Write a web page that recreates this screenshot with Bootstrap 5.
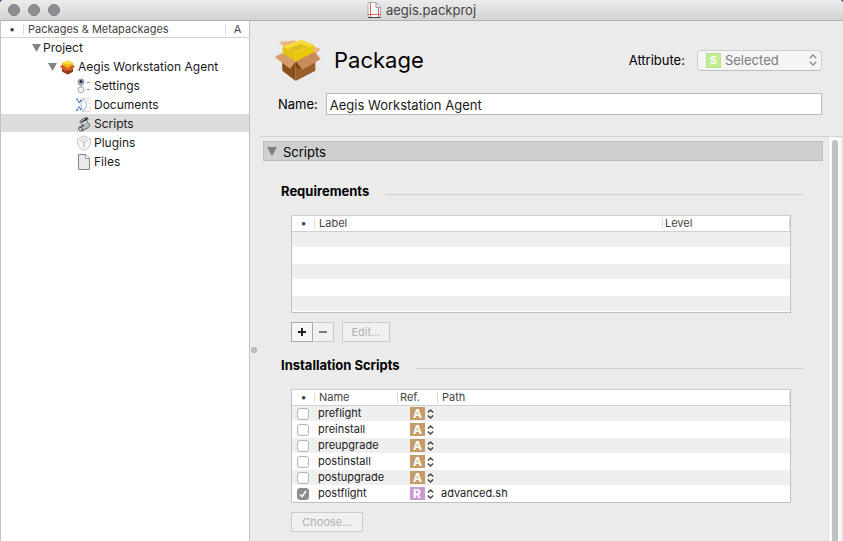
<!DOCTYPE html>
<html lang="en">
<head>
<meta charset="utf-8">
<meta name="viewport" content="width=device-width, initial-scale=1">
<title>aegis.packproj</title>
<link href="https://cdn.jsdelivr.net/npm/bootstrap@5.3.0/dist/css/bootstrap.min.css" rel="stylesheet">
<style>
  body { font-family: Inter, "Liberation Sans", sans-serif; font-size: 13px; line-height: 16px; color: #000; background: #27468c; }
  svg { display: block; flex: none; }
  .app-window { background: #ebebeb; border-radius: 4px 4px 0 0; overflow: hidden; }
  .title-bar { height: 21px; background: linear-gradient(#ececec, #d3d3d3); border-bottom: 1px solid #b1b1b1; color: #444; }
  .lights { width: 0; padding-left: 8px; gap: 8px; }
  .light { width: 12px; height: 12px; border-radius: 50%; background: #8f8e93; border: 1px solid #7e7d82; flex: none; padding: 0; }

  .source-list { width: 250px; background: #fff; border: solid #c2c2c2; border-width: 0 1px; font-size: 12px; }
  .source-head { height: 17px; border-bottom: 1px solid #d2d2d2; font-size: 11px; color: #444; }
  .source-head > * + * { border-left: 1px solid #dcdcdc; line-height: 11px; }
  .dot-col { width: 22px; }
  .attr-col { width: 24px; }
  .tree-row { height: 19px; padding-top: 2px; border-bottom: 1px solid transparent; background-clip: padding-box; color: #1a1a1a; text-decoration: none; }
  .tree-row.active { background-color: #dcdcdc; }
  .lvl-1 { padding-left: 31px; gap: 2px; }
  .lvl-2 { padding-left: 47px; gap: 3px; }
  .lvl-3 { padding-left: 75px; gap: 2px; }

  .splitter { width: 10px; padding-top: 326px; }
  .grip { width: 6px; height: 6px; border-radius: 50%; background: #c0c0c0; border: 1px solid #acacac; margin-left: 1px; }
  .pkg-head { height: 116px; padding: 17px 20px 21px 14px; border-bottom: 1px solid #d2d2d2; margin-right: 1px; }
  .pkg-title { font-size: 22px; line-height: 28px; font-weight: 400; }
  .popup { width: 125px; height: 21px; border: 1px solid #cfcfcf; border-bottom-color: #bdbdbd; border-radius: 4px; background: #f5f5f5; padding: 0 4px 0 8px; gap: 4px; }
  .popup select { appearance: none; border: 0; background: none; color: #7b7b7b; opacity: 1; padding: 0; min-width: 0; }
  .tag-s { width: 15px; height: 15px; background: #c1ed95; border: 1px solid #b6e58a; color: #fff; font-weight: 700; font-size: 11px; line-height: 13px; }
  .name-input { height: 22px; border: 1px solid #b9b9b9; background: #fff; padding: 2px 3px 0; min-width: 0; color: #1a1a1a; outline: 0; }

  .pane { padding: 4px 5px 9px 3px; min-width: 0; }
  .section-bar { height: 20px; border: 1px solid #bdbdbd; background: #cfcfcf; padding: 1px 3px 0; gap: 6px; }
  .group { padding: 15px 20px 0 18px; }
  .section-bar + .group { padding-top: 22px; }
  .group h2 { font-size: 13px; line-height: 16px; font-weight: 700; }
  .rule { height: 1px; background: #d0d0d0; margin-top: 7px; }
  .group-body { padding: 0 12px 0 10px; }

  .data-table { width: 100%; margin-bottom: 9px; table-layout: fixed; border-collapse: separate; border-spacing: 0; border: 1px solid #c0c0c0; border-top-color: #d0d0d0; background: #fff; font-size: 11px; line-height: 15px; color: #1a1a1a; }
  .data-table th { height: 16px; padding: 0 4px; font-weight: 400; color: #444; border-bottom: 1px solid #d0d0d0; background: linear-gradient(#dcdcdc, #dcdcdc) right 2px / 1px 11px no-repeat; }
  .data-table td { height: 16px; padding: 0 3px; border-bottom: 1px solid #fff; background-clip: padding-box; }
  .data-table tbody tr:nth-child(odd) td { background-color: #efefef; }
  .data-table .c-dot { width: 23px; padding: 0; text-align: center; }
  .c-name { width: 83px; }
  .c-ref { width: 40px; }
  .c-level { width: 127px; }
  .data-table th.tight { padding-left: 2px; }
  .data-table td.ref-cell { padding: 0 0 0 12px; }
  .data-table input { appearance: none; display: block; width: 12px; height: 12px; margin: 1px 0 0 5px; border: 1px solid #b4b4b4; border-radius: 3px; background: #fff; }
  .data-table input:checked { border-color: #8a898e; background: #8e8d92 url("data:image/svg+xml,%3Csvg xmlns='http://www.w3.org/2000/svg' viewBox='0 0 10 10'%3E%3Cpath d='M2 5.4l2 2.2L8 2' fill='none' stroke='white' stroke-width='1.5'/%3E%3C/svg%3E") center / 10px 10px; }
  .ref-pick { --tag: #c69c6d; appearance: none; display: block; width: 25px; height: 13px; border: 0; padding: 0 0 0 3px; color: #fff; font-size: 12px; line-height: 13px; font-weight: 700;
    background: url("data:image/svg+xml,%3Csvg xmlns='http://www.w3.org/2000/svg' viewBox='0 0 7 10'%3E%3Cpath d='M.8 3.6L3.5 1l2.7 2.6M.8 6.4L3.500 9l2.7-2.6' fill='none' stroke='%23444' stroke-width='1.4'/%3E%3C/svg%3E") right 1px top 2px / 7px 10px no-repeat, linear-gradient(var(--tag), var(--tag)) left / 15px 13px no-repeat; }
  .ref-pick.rel { --tag: #cc99d2; }
  .ref-pick option { color: #000; }

  .tool-btn { height: 20px; border: 1px solid #a9a9a9; background: #f6f6f6; color: #222; padding: 0; font-size: 11px; line-height: 16px; }
  .tool-btn:disabled { border-color: #cbcbcb; background: #f0f0f0; color: #b2b2b2; }
  .tool-btn.sq { width: 22px; }
  .tool-btn.sq + .sq { width: 21px; border-left: 0; }
  .w-edit { width: 48px; }
  .w-choose { width: 72px; }

  .track { width: 15px; padding: 3px 3px 0; background: #fafafa; border-left: 1px solid #e3e3e3; border-right: 2px solid #ebebeb; }
  .thumb { width: 8px; border-radius: 4px 4px 0 0; background: #c1c1c1; }
</style>
<script src="https://cdn.jsdelivr.net/npm/bootstrap@5.3.0/dist/js/bootstrap.bundle.min.js"></script>
</head>
<body>
<div class="app-window d-flex flex-column min-vh-100">
  <header class="title-bar d-flex align-items-center">
    <div class="lights d-flex">
      <button class="light" aria-label="Close"></button>
      <button class="light" aria-label="Minimise"></button>
      <button class="light" aria-label="Zoom"></button>
    </div>
    <div class="flex-fill d-flex justify-content-center align-items-center gap-1 pe-2">
      <svg width="15" height="16" viewBox="0 0 15 16"><path d="M1 .5h8.500l4 4V15.500H1z" fill="#fafafa" stroke="#aaa"/><path d="M1 15.500h12.500" stroke="#444"/><path d="M9 1v4.500h4.500" fill="#e4e4e4" stroke="#999"/><path d="M3.500 1v14M11.500 6v9M1 12.500h12.500" stroke="#e86060"/></svg>
      <span>aegis.packproj</span>
    </div>
  </header>

  <div class="d-flex flex-fill">
    <nav class="source-list flex-shrink-0" aria-label="Project">
      <div class="source-head d-flex align-items-center">
        <span class="dot-col text-center">•</span>
        <span class="flex-fill ps-1">Packages &amp; Metapackages</span>
        <span class="attr-col text-center">A</span>
      </div>
      <a href="#" class="tree-row lvl-1 d-flex align-items-center">
        <svg width="9" height="8" viewBox="0 0 9 8"><path d="M0 0h9L4.500 8z" fill="#858585"/></svg>Project</a>
      <a href="#" class="tree-row lvl-2 d-flex align-items-center">
        <svg width="9" height="8" viewBox="0 0 9 8"><path d="M0 0h9L4.500 8z" fill="#858585"/></svg>
        <svg width="15" height="15" viewBox="0 0 15 15"><path d="M2 7l5.500 3L13 7v4.500l-5.500 3L2 11.500z" fill="#a83018"/><path d="M7.500 9.500L13 7v4.500l-5.500 3z" fill="#8a3a14"/><path d="M2 3L8 .5 13 3v4l-5.500 3L2 7z" fill="#e9b414"/><path d="M2 3L8 .5 13 3 7.500 5z" fill="#f8dd3c"/><path d="M0 6.500L2 5l5.500 3.500L6 11.500z" fill="#d8452a"/><path d="M15 6.500L13 5 7.500 8.500 9 11.500z" fill="#cf5530"/><path d="M1 7.500l5 3M14 7.500l-4.500 3" stroke="#e88860" stroke-width=".7"/></svg>
        Aegis Workstation Agent</a>
      <a href="#" class="tree-row lvl-3 d-flex align-items-center">
        <svg width="16" height="16" viewBox="0 0 16 16"><circle cx="5" cy="4" r="3" fill="#a9bccf" stroke="#8795a3"/><circle cx="5" cy="3.500" r="1.600" fill="#1d2b40"/><path d="M3.800 7h2.400v2H3.800z" fill="#bbb"/><circle cx="5" cy="11.800" r="3" fill="#f4f4f4" stroke="#a5a5a5"/><path d="M10.500 4.500H14M10.500 11.500H14" stroke="#999"/></svg>Settings</a>
      <a href="#" class="tree-row lvl-3 d-flex align-items-center">
        <svg width="16" height="16" viewBox="0 0 16 16"><path d="M5 1.500h10M5 14.500h10" stroke="#ddd"/><path d="M.5 1.500L3 5.500M5 3L3 6M.5 14L3 10M5 13L3 9.500" fill="none" stroke="#2f6cc8" stroke-width="1.400" stroke-dasharray="2.200 .8"/><path d="M7 2q-4 6 0 12M7 2q7 6 0 12" fill="none" stroke="#9fb2cc"/><path d="M11 4h4M12.500 6.500H15M14 9v4" stroke="#ccc" stroke-dasharray="2 1"/></svg>Documents</a>
      <a href="#" class="tree-row active lvl-3 d-flex align-items-center" aria-current="page">
        <svg width="16" height="16" viewBox="0 0 16 16"><path d="M4.500 4.500L9.500 1.500Q12 1 12 3.500L10.500 5l3 3.500q.8 2-1 3L7 14.500q-3 1.500-4.500-1-.5-2 1.500-3L7.500 9 4.500 7q-1-1.500 0-2.500z" fill="#bdbdbd" stroke="#626262"/><path d="M5.500 6q3 0 5.500-4" fill="none" stroke="#222" stroke-width="1.500"/><path d="M6 7.500l4.500-2.300" stroke="#eee" stroke-width="1.300"/><path d="M3.500 11.500q3-1 3.500 2.500M8 9l-1.500 2" fill="none" stroke="#444"/></svg>Scripts</a>
      <a href="#" class="tree-row lvl-3 d-flex align-items-center">
        <svg width="16" height="16" viewBox="0 0 16 16"><path d="M8 1l6.500 3q.5 6-2 8.500L8 15.500l-4.500-3Q1 10 1.500 4z" fill="#f6f6f6" stroke="#c4c4c4"/><path d="M4.500 5.500L8 4l3.500 1.500L8 7z" fill="#fff" stroke="#ccc"/><path d="M8 7v5" stroke="#aaa"/></svg>Plugins</a>
      <a href="#" class="tree-row lvl-3 d-flex align-items-center">
        <svg width="16" height="16" viewBox="0 0 16 16"><path d="M2.500 .5h7.500l3.500 3.500v11.500h-11z" fill="#e9e9e9" stroke="#858585"/><path d="M9.500 .5V4.500h4" fill="#fff" stroke="#999"/></svg>Files</a>
    </nav>

    <div class="splitter flex-shrink-0"><div class="grip"></div></div>

    <main class="d-flex flex-column flex-fill">
      <div class="pkg-head d-flex flex-column justify-content-between">
        <div class="d-flex align-items-center">
          <svg width="48" height="44" viewBox="73 114 144 132">
            <path d="M88 126l52-5-30 26zM150 122l63 25-17 19-30-10z" fill="#eeb487"/>
            <path d="M97 165l41 22v56l-40-31z" fill="#8a4e1b"/><path d="M138 187l59-26v51l-59 31z" fill="#99602c"/>
            <path d="M138 187l59-26v20l-36 30-23-10z" fill="#7d4415"/>
            <path d="M99 140l56-20 38 15v23l-55 28-39-24z" fill="#e6c010"/>
            <path d="M138 156l55-21v23l-55 28z" fill="#e9c808"/>
            <path d="M99 140l56-20 38 15-55 21z" fill="#f7dc3a"/>
            <path d="M112 146l40-14 28 9-42 15z" fill="#dfbf1c"/>
            <path d="M99 140l39 16 55-21M138 156v28" fill="none" stroke="#f6e060" stroke-width="1.500"/>
            <path d="M97 160l42 24-18 22-46-35z" fill="#d79a69"/><path d="M139 184l56-28 18 21-55 33z" fill="#c98b5a"/>
          </svg>
          <h1 class="pkg-title mb-0 ms-2 ps-1 flex-fill">Package</h1>
          <label for="attribute" class="me-2 pe-1">Attribute:</label>
          <div class="popup d-flex align-items-center">
            <span class="tag-s text-center flex-shrink-0">S</span>
            <select id="attribute" class="flex-fill" disabled><option>Selected</option></select>
            <svg width="8" height="12" viewBox="0 0 8 12"><path d="M.8 4.200L4 1l3.200 3.200M.8 7.800L4 11l3.200-3.200" fill="none" stroke="#8a8a8a" stroke-width="1.300"/></svg>
          </div>
        </div>
        <div class="d-flex align-items-center">
          <label for="pkgname" class="ps-1 me-2">Name:</label>
          <input id="pkgname" class="name-input flex-fill" type="text" value="Aegis Workstation Agent">
        </div>
      </div>

      <div class="d-flex flex-fill">
        <div class="pane flex-fill">
          <div class="section-bar d-flex align-items-center">
            <svg width="10" height="9" viewBox="0 0 10 9"><path d="M0 0h10L5 9z" fill="#7f7f7f"/></svg>
            <span>Scripts</span>
          </div>

          <section class="group">
            <div class="d-flex align-items-center gap-3 mb-3">
              <h2 class="mb-0">Requirements</h2><div class="rule flex-fill"></div>
            </div>
            <div class="group-body">
              <table class="data-table">
                <thead><tr><th class="c-dot">•</th><th>Label</th><th class="c-level tight">Level</th></tr></thead>
                <tbody>
                  <tr><td></td><td></td><td></td></tr>
                  <tr><td></td><td></td><td></td></tr>
                  <tr><td></td><td></td><td></td></tr>
                  <tr><td></td><td></td><td></td></tr>
                  <tr><td></td><td></td><td></td></tr>
                </tbody>
              </table>
              <div class="d-flex">
                <button class="tool-btn sq d-flex align-items-center justify-content-center" aria-label="Add"><svg width="8" height="8" viewBox="0 0 8 8"><path d="M0 4h8M4 0v8" stroke="#222" stroke-width="2"/></svg></button>
                <button class="tool-btn sq d-flex align-items-center justify-content-center" aria-label="Remove" disabled><svg width="8" height="8" viewBox="0 0 8 8"><path d="M0 4h8" stroke="#7c7c7c" stroke-width="2"/></svg></button>
                <button class="tool-btn w-edit ms-2" disabled>Edit...</button>
              </div>
            </div>
          </section>

          <section class="group">
            <div class="d-flex align-items-center gap-3 mb-3">
              <h2 class="mb-0">Installation Scripts</h2><div class="rule flex-fill"></div>
            </div>
            <div class="group-body">
              <table class="data-table">
                <thead><tr><th class="c-dot">•</th><th class="c-name">Name</th><th class="c-ref tight">Ref.</th><th>Path</th></tr></thead>
                <tbody>
                  <tr><td class="c-dot"><input type="checkbox" aria-label="preflight"></td><td>preflight</td><td class="ref-cell"><select class="ref-pick" aria-label="preflight reference"><option>A</option><option>R</option></select></td><td></td></tr>
                  <tr><td class="c-dot"><input type="checkbox" aria-label="preinstall"></td><td>preinstall</td><td class="ref-cell"><select class="ref-pick" aria-label="preinstall reference"><option>A</option><option>R</option></select></td><td></td></tr>
                  <tr><td class="c-dot"><input type="checkbox" aria-label="preupgrade"></td><td>preupgrade</td><td class="ref-cell"><select class="ref-pick" aria-label="preupgrade reference"><option>A</option><option>R</option></select></td><td></td></tr>
                  <tr><td class="c-dot"><input type="checkbox" aria-label="postinstall"></td><td>postinstall</td><td class="ref-cell"><select class="ref-pick" aria-label="postinstall reference"><option>A</option><option>R</option></select></td><td></td></tr>
                  <tr><td class="c-dot"><input type="checkbox" aria-label="postupgrade"></td><td>postupgrade</td><td class="ref-cell"><select class="ref-pick" aria-label="postupgrade reference"><option>A</option><option>R</option></select></td><td></td></tr>
                  <tr><td class="c-dot"><input type="checkbox" aria-label="postflight" checked></td><td>postflight</td><td class="ref-cell"><select class="ref-pick rel" aria-label="postflight reference"><option>A</option><option selected>R</option></select></td><td>advanced.sh</td></tr>
                </tbody>
              </table>
              <button class="tool-btn w-choose d-block" disabled>Choose...</button>
            </div>
          </section>
        </div>
        <div class="track d-flex flex-shrink-0"><div class="thumb"></div></div>
      </div>
    </main>
  </div>
</div>
</body>
</html>
